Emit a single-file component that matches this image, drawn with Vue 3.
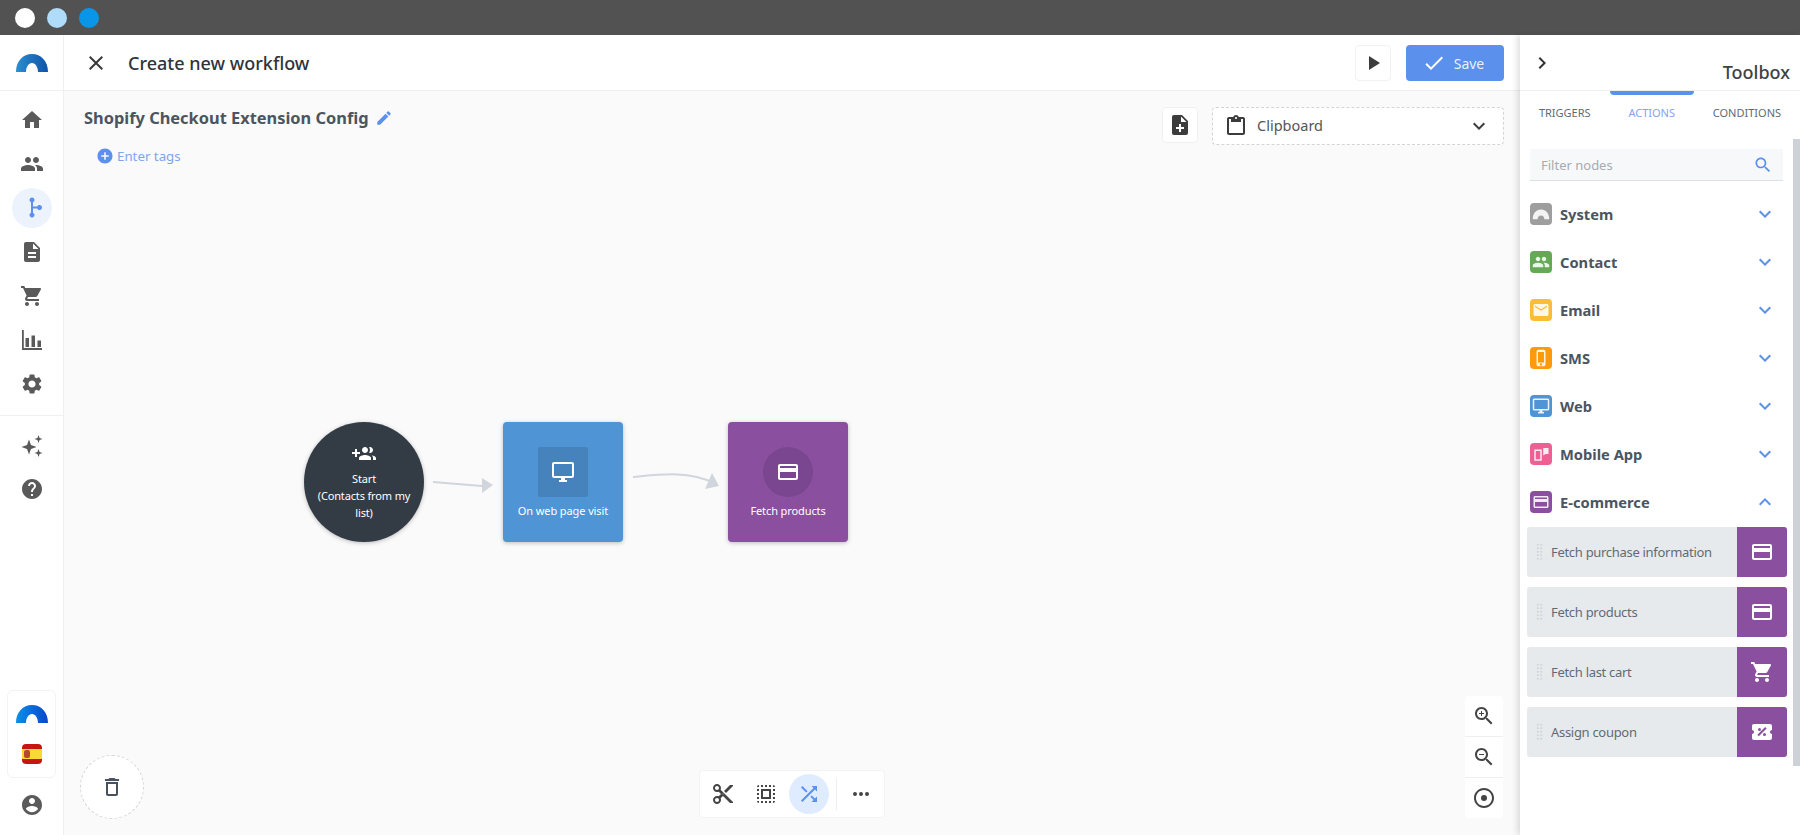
<script setup>
const icons = {
  home: 'M10 20v-6h4v6h5v-8h3L12 3 2 12h3v8z',
  people: 'M16 11c1.66 0 2.99-1.34 2.99-3S17.66 5 16 5c-1.66 0-3 1.34-3 3s1.34 3 3 3zm-8 0c1.66 0 2.99-1.34 2.99-3S9.66 5 8 5C6.34 5 5 6.34 5 8s1.34 3 3 3zm0 2c-2.33 0-7 1.17-7 3.5V19h14v-2.5c0-2.33-4.67-3.5-7-3.5zm8 0c-.29 0-.62.02-.97.05 1.16.84 1.97 1.97 1.97 3.45V19h6v-2.5c0-2.33-4.67-3.5-7-3.5z',
  flow: 'M12 1.500a2.500 2.500 0 0 1 1 4.800v4.200h4.200a2.500 2.500 0 1 1 0 2H13v4.200a2.500 2.500 0 1 1-2 0V6.300a2.500 2.500 0 0 1 1-4.800z',
  doc: 'M14 2H6c-1.1 0-1.99.9-1.99 2L4 20c0 1.1.89 2 1.99 2H18c1.1 0 2-.9 2-2V8l-6-6zm2 16H8v-2h8v2zm0-4H8v-2h8v2zm-3-5V3.5L18.5 9H13z',
  cart: 'M7 18c-1.1 0-1.99.9-1.99 2S5.9 22 7 22s2-.9 2-2-.9-2-2-2zM1 2v2h2l3.6 7.59-1.35 2.45c-.16.28-.25.61-.25.96 0 1.1.9 2 2 2h12v-2H7.42c-.14 0-.25-.11-.25-.25l.03-.12.9-1.63h7.45c.75 0 1.41-.41 1.75-1.03l3.58-6.49c.08-.14.12-.31.12-.48 0-.55-.45-1-1-1H5.21l-.94-2H1zm16 16c-1.1 0-1.99.9-1.99 2s.89 2 1.99 2 2-.9 2-2-.9-2-2-2z',
  chart: 'M2 2h1.800v18H22v2H2zM5.500 10h3.500v9H5.500zM11.500 7.500H15V19h-3.500zM17.500 12.500H21V19h-3.500z',
  gear: 'M19.14 12.94c.04-.3.06-.61.06-.94 0-.32-.02-.64-.07-.94l2.03-1.58c.18-.14.23-.41.12-.61l-1.92-3.32c-.12-.22-.37-.29-.59-.22l-2.39.96c-.5-.38-1.03-.7-1.62-.94l-.36-2.54c-.04-.24-.24-.41-.48-.41h-3.84c-.24 0-.43.17-.47.41l-.36 2.54c-.59.24-1.13.57-1.62.94l-2.39-.96c-.22-.08-.47 0-.59.22L2.74 8.87c-.12.21-.08.47.12.61l2.03 1.58c-.05.3-.09.63-.09.94s.02.64.07.94l-2.03 1.58c-.18.14-.23.41-.12.61l1.92 3.32c.12.22.37.29.59.22l2.39-.96c.5.38 1.03.7 1.62.94l.36 2.54c.05.24.24.41.48.41h3.84c.24 0 .44-.17.47-.41l.36-2.54c.59-.24 1.13-.56 1.62-.94l2.39.96c.22.08.47 0 .59-.22l1.92-3.32c.12-.22.07-.47-.12-.61l-2.01-1.58zM12 15.6c-1.98 0-3.6-1.62-3.6-3.6s1.62-3.6 3.6-3.6 3.6 1.62 3.6 3.6-1.62 3.6-3.6 3.6z',
  sparkle: 'M9 5.500l2 5.500 5.500 2-5.500 2-2 5.500-2-5.500-5.500-2 5.500-2zM18.500 1l1.100 2.900 2.900 1.100-2.900 1.100-1.100 2.900-1.100-2.900L14.500 5l2.900-1.100zM18.500 15l1.100 2.900 2.900 1.100-2.900 1.100-1.100 2.900-1.100-2.900-2.900-1.100 2.900-1.100z',
  help: 'M12 2C6.48 2 2 6.48 2 12s4.48 10 10 10 10-4.48 10-10S17.52 2 12 2zm1 17h-2v-2h2v2zm2.07-7.75l-.9.92C13.45 12.9 13 13.5 13 15h-2v-.5c0-1.1.45-2.1 1.17-2.83l1.24-1.26c.37-.36.59-.86.59-1.41 0-1.1-.9-2-2-2s-2 .9-2 2H8c0-2.21 1.79-4 4-4s4 1.790 4 4c0 .88-.36 1.68-.93 2.25z',
  account: 'M12 2C6.48 2 2 6.48 2 12s4.48 10 10 10 10-4.48 10-10S17.52 2 12 2zm0 3c1.66 0 3 1.34 3 3s-1.34 3-3 3-3-1.34-3-3 1.34-3 3-3zm0 14.2c-2.5 0-4.71-1.28-6-3.22.03-1.99 4-3.08 6-3.08 1.99 0 5.97 1.09 6 3.08-1.29 1.94-3.5 3.22-6 3.22z',
  close: 'M19 6.41L17.59 5 12 10.59 6.41 5 5 6.41 10.59 12 5 17.59 6.41 19 12 13.41 17.59 19 19 17.59 13.41 12z',
  play: 'M8 5v14l11-7z',
  check: 'M9 16.17L4.83 12l-1.42 1.41L9 19 21 7l-1.41-1.41z',
  noteAdd: 'M14 2H6c-1.1 0-2 .9-2 2v16c0 1.1.9 2 2 2h12c1.1 0 2-.9 2-2V8l-6-6zm2 14h-3v3h-2v-3H8v-2h3v-3h2v3h3v2zm-3-7V3.5L18.5 9H13z',
  clipboard: 'M19 3h-4.18C14.4 1.84 13.3 1 12 1c-1.3 0-2.4.84-2.82 2H5c-1.1 0-2 .9-2 2v14c0 1.1.9 2 2 2h14c1.1 0 2-.9 2-2V5c0-1.1-.9-2-2-2zm-7 0c.55 0 1 .45 1 1s-.45 1-1 1-1-.45-1-1 .45-1 1-1zm7 16H5V5h2v3h10V5h2v14z',
  down: 'M16.59 8.59L12 13.17 7.41 8.59 6 10l6 6 6-6z',
  up: 'M12 8l-6 6 1.41 1.41L12 10.83l4.59 4.58L18 14z',
  right: 'M10 6L8.59 7.41 13.17 12l-4.58 4.59L10 18l6-6z',
  search: 'M15.5 14h-.79l-.28-.27C15.41 12.59 16 11.11 16 9.5 16 5.91 13.09 3 9.5 3S3 5.91 3 9.5 5.91 16 9.5 16c1.61 0 3.09-.59 4.23-1.57l.27.28v.79l5 4.99L20.49 19l-4.99-5zm-6 0C7.01 14 5 11.99 5 9.5S7.01 5 9.5 5 14 7.01 14 9.5 11.99 14 9.5 14z',
  card: 'M20 4H4c-1.11 0-1.99.89-1.99 2L2 18c0 1.11.89 2 2 2h16c1.11 0 2-.89 2-2V6c0-1.11-.89-2-2-2zm0 14H4v-6h16v6zm0-10H4V6h16v2z',
  email: 'M20 4H4c-1.1 0-1.99.9-1.99 2L2 18c0 1.1.9 2 2 2h16c1.1 0 2-.9 2-2V6c0-1.1-.9-2-2-2zm0 4l-8 5-8-5V6l8 5 8-5v2z',
  phone: 'M15.5 1h-7C7.12 1 6 2.12 6 3.500v17C6 21.880 7.120 23 8.500 23h7c1.380 0 2.500-1.120 2.500-2.500v-17C18 2.120 16.880 1 15.500 1zm-3.500 21c-.83 0-1.500-.67-1.500-1.500S11.170 19 12 19s1.500.67 1.500 1.500S12.830 22 12 22zm4-4H8V4h8v14z',
  desktop: 'M21 2H3c-1.1 0-2 .9-2 2v12c0 1.1.9 2 2 2h7v2H8v2h8v-2h-2v-2h7c1.1 0 2-.9 2-2V4c0-1.1-.9-2-2-2zm0 14H3V4h18v12z',
  app: 'M3 6h10v15H3zm2 2v11h6V8zM15 4h7v8h-4l-3 2z',
  groupAdd: 'M8 10H5V7H3v3H0v2h3v3h2v-3h3v-2zm10 1c1.66 0 2.99-1.34 2.99-3S19.66 5 18 5c-.32 0-.63.05-.91.14.57.81.9 1.79.9 2.86s-.34 2.04-.9 2.86c.28.09.59.14.91.14zm-5 0c1.66 0 2.99-1.34 2.99-3S14.66 5 13 5s-3 1.34-3 3 1.34 3 3 3zm6.62 2.16c.83.73 1.38 1.66 1.38 2.84v2h3v-2c0-1.54-2.37-2.49-4.38-2.84zM13 13c-2 0-6 1-6 3v2h12v-2c0-2-4-3-6-3z',
  coupon: 'M22 10V6c0-1.1-.9-2-2-2H4c-1.1 0-1.99.9-1.99 2v4c1.1 0 1.990.9 1.990 2s-.89 2-2 2v4c0 1.100.9 2 2 2h16c1.100 0 2-.9 2-2v-4c-1.100 0-2-.9-2-2s.9-2 2-2zM9.500 8a1.500 1.500 0 1 1 0 3 1.500 1.500 0 0 1 0-3zm5 8a1.500 1.500 0 1 1 0-3 1.500 1.500 0 0 1 0 3zm-5.700.2l-1.400-1.400 7.800-7.800 1.400 1.400z',
  zoomIn: 'M15.5 14h-.79l-.28-.27C15.41 12.59 16 11.11 16 9.5 16 5.91 13.09 3 9.5 3S3 5.91 3 9.5 5.91 16 9.5 16c1.61 0 3.09-.59 4.23-1.57l.27.28v.79l5 4.99L20.49 19l-4.99-5zm-6 0C7.01 14 5 11.99 5 9.5S7.01 5 9.5 5 14 7.01 14 9.5 11.99 14 9.5 14zm2.500-4h-2v2H9v-2H7V9h2V7h1v2h2v1z',
  zoomOut: 'M15.5 14h-.79l-.28-.27C15.41 12.59 16 11.11 16 9.5 16 5.91 13.09 3 9.5 3S3 5.91 3 9.5 5.91 16 9.5 16c1.61 0 3.09-.59 4.23-1.57l.27.28v.79l5 4.99L20.49 19l-4.99-5zm-6 0C7.01 14 5 11.99 5 9.5S7.01 5 9.5 5 14 7.01 14 9.5 11.99 14 9.5 14zM7 9h5v1H7z',
  target: 'M12 9a3 3 0 1 0 0 6 3 3 0 0 0 0-6zm0-7C6.48 2 2 6.48 2 12s4.48 10 10 10 10-4.48 10-10S17.52 2 12 2zm0 18c-4.42 0-8-3.58-8-8s3.58-8 8-8 8 3.58 8 8-3.58 8-8 8z',
  shuffle: 'M10.59 9.17L5.41 4 4 5.41l5.17 5.17 1.42-1.41zM14.5 4l2.04 2.04L4 18.59 5.41 20 17.96 7.46 20 9.5V4h-5.5zm.33 9.41l-1.41 1.41 3.13 3.13L14.5 20H20v-5.5l-2.04 2.04-3.13-3.13z',
  cut: 'M9.64 7.64c.23-.5.36-1.05.36-1.64 0-2.21-1.79-4-4-4S2 3.79 2 6s1.79 4 4 4c.59 0 1.14-.13 1.64-.36L10 12l-2.36 2.36C7.14 14.13 6.59 14 6 14c-2.21 0-4 1.79-4 4s1.79 4 4 4 4-1.79 4-4c0-.59-.13-1.14-.36-1.64L12 14l7 7h3v-1L9.64 7.64zM6 8c-1.1 0-2-.89-2-2s.9-2 2-2 2 .89 2 2-.9 2-2 2zm0 12c-1.1 0-2-.89-2-2s.9-2 2-2 2 .89 2 2-.9 2-2 2zm6-7.500c-.28 0-.5-.22-.5-.5s.22-.5.5-.5.5.22.5.5-.22.5-.5.5zM19 3l-6 6 2 2 7-7V3z',
  selectAll: 'M3 5h2V3c-1.1 0-2 .9-2 2zm0 8h2v-2H3v2zm4 8h2v-2H7v2zM3 9h2V7H3v2zm10-6h-2v2h2V3zm6 0v2h2c0-1.1-.9-2-2-2zM5 21v-2H3c0 1.1.9 2 2 2zm-2-4h2v-2H3v2zM9 3H7v2h2V3zm2 18h2v-2h-2v2zm8-8h2v-2h-2v2zm0 8c1.1 0 2-.9 2-2h-2v2zm0-12h2V7h-2v2zm0 8h2v-2h-2v2zm-4 4h2v-2h-2v2zm0-16h2V3h-2v2zM7 17h10V7H7v10zm2-8h6v6H9V9z',
  more: 'M6 10a2 2 0 1 0 0 4 2 2 0 0 0 0-4zm12 0a2 2 0 1 0 0 4 2 2 0 0 0 0-4zm-6 0a2 2 0 1 0 0 4 2 2 0 0 0 0-4z',
  trash: 'M6 19c0 1.1.9 2 2 2h8c1.1 0 2-.9 2-2V7H6v12zM8 9h8v10H8V9zm7.5-5l-1-1h-5l-1 1H5v2h14V4z',
  edit: 'M3 17.25V21h3.75L17.81 9.94l-3.75-3.75L3 17.25zM20.71 7.04c.39-.39.39-1.02 0-1.41l-2.34-2.34c-.39-.39-1.02-.39-1.41 0l-1.83 1.83 3.75 3.75 1.83-1.83z',
  addCircle: 'M12 2C6.48 2 2 6.48 2 12s4.48 10 10 10 10-4.48 10-10S17.52 2 12 2zm5 11h-4v4h-2v-4H7v-2h4V7h2v4h4v2z',
  arch: 'M1 19C1 11 5.500 6 12 6s11 5 11 13h-6.500c0-3-1.800-5-4.500-5s-4.500 2-4.500 5z'
}

const navTop = [
  { icon: 'home' },
  { icon: 'people' },
  { icon: 'flow', active: true },
  { icon: 'doc' },
  { icon: 'cart' },
  { icon: 'chart' },
  { icon: 'gear' }
]
const navBottom = ['sparkle', 'help']

const tabs = [
  { label: 'Triggers' },
  { label: 'Actions', active: true },
  { label: 'Conditions' }
]

const groups = [
  { label: 'System', icon: 'arch', color: '#9e9e9e' },
  { label: 'Contact', icon: 'people', color: '#64a955' },
  { label: 'Email', icon: 'email', color: '#fbbd35' },
  { label: 'SMS', icon: 'phone', color: '#fd9a0b' },
  { label: 'Web', icon: 'desktop', color: '#4f94d4' },
  { label: 'Mobile App', icon: 'app', color: '#ee5f94' },
  { label: 'E-commerce', icon: 'card', color: '#8a4f9e', open: true }
]

const items = [
  { label: 'Fetch purchase information', icon: 'card' },
  { label: 'Fetch products', icon: 'card' },
  { label: 'Fetch last cart', icon: 'cart' },
  { label: 'Assign coupon', icon: 'coupon' }
]

const tools = [
  { icon: 'cut' },
  { icon: 'selectAll' },
  { icon: 'shuffle', active: true }
]
const zooms = ['zoomIn', 'zoomOut', 'target']
</script>

<template>
  <div class="app">
    <div class="titlebar">
      <span class="dot dot-white"></span>
      <span class="dot dot-light"></span>
      <span class="dot dot-blue"></span>
    </div>

    <div class="body">
      <aside class="sidebar">
        <div class="side-logo">
          <svg width="32" height="18" viewBox="0 0 32 18">
            <defs>
              <linearGradient id="logoA" x1="0" x2="1" y1="0" y2="0">
                <stop offset="0" stop-color="#2a8fcf" />
                <stop offset="1" stop-color="#0f53a8" />
              </linearGradient>
            </defs>
            <path d="M0 18C0 7 7 0 16 0s16 7 16 18H22c0-5-2.500-9-6-9s-6 4-6 9z" fill="url(#logoA)" />
          </svg>
        </div>
        <nav class="nav">
          <div v-for="n in navTop" :key="n.icon" class="nav-item" :class="{ active: n.active }">
            <svg width="24" height="24" viewBox="0 0 24 24"><path :d="icons[n.icon]" /></svg>
          </div>
        </nav>
        <nav class="nav nav-second">
          <div v-for="n in navBottom" :key="n" class="nav-item">
            <svg width="24" height="24" viewBox="0 0 24 24"><path :d="icons[n]" /></svg>
          </div>
        </nav>
        <div class="side-bottom">
          <div class="brand-card">
            <svg width="32" height="18" viewBox="0 0 32 18">
              <defs>
                <linearGradient id="logoB" x1="0" x2="1" y1="0" y2="0">
                  <stop offset="0" stop-color="#0a90ea" />
                  <stop offset="1" stop-color="#0a45cc" />
                </linearGradient>
              </defs>
              <path d="M0 18C0 7 7 0 16 0s16 7 16 18H22c0-5-2.500-9-6-9s-6 4-6 9z" fill="url(#logoB)" />
            </svg>
            <div class="flag">
              <span class="flag-emblem"></span>
            </div>
          </div>
          <div class="nav-item account">
            <svg width="24" height="24" viewBox="0 0 24 24"><path :d="icons.account" /></svg>
          </div>
        </div>
      </aside>

      <main class="main">
        <header class="topbar">
          <svg class="close" width="24" height="24" viewBox="0 0 24 24"><path :d="icons.close" /></svg>
          <h1 class="page-title">Create new workflow</h1>
          <div class="top-actions">
            <button class="icon-btn play">
              <svg width="24" height="24" viewBox="0 0 24 24"><path :d="icons.play" /></svg>
            </button>
            <button class="save">
              <svg width="24" height="24" viewBox="0 0 24 24"><path :d="icons.check" /></svg>
              <span>Save</span>
            </button>
          </div>
        </header>

        <section class="canvas">
          <div class="canvas-head">
            <div class="head-left">
              <div class="flow-name">
                <span>Shopify Checkout Extension Config</span>
                <svg width="18" height="18" viewBox="0 0 24 24"><path :d="icons.edit" /></svg>
              </div>
              <div class="tags">
                <svg width="18" height="18" viewBox="0 0 24 24"><path :d="icons.addCircle" /></svg>
                <span>Enter tags</span>
              </div>
            </div>
            <div class="head-right">
              <button class="icon-btn note">
                <svg width="24" height="24" viewBox="0 0 24 24"><path :d="icons.noteAdd" /></svg>
              </button>
              <div class="clipboard">
                <svg width="24" height="24" viewBox="0 0 24 24"><path :d="icons.clipboard" /></svg>
                <span class="clip-text">Clipboard</span>
                <svg class="clip-arrow" width="24" height="24" viewBox="0 0 24 24"><path :d="icons.down" /></svg>
              </div>
            </div>
          </div>

          <svg class="edges" width="1456" height="744">
            <path d="M369 391L418 395" />
            <polygon points="418,387 429,394 418,402" />
            <path d="M569 386C600 383 625 380 650 392" />
            <polygon points="641,398 655,395 648,382" />
          </svg>

          <div class="node node-start">
            <svg width="24" height="24" viewBox="0 0 24 24"><path :d="icons.groupAdd" /></svg>
            <div class="start-text">Start<br />(Contacts from my list)</div>
          </div>
          <div class="node node-box node-web">
            <span class="node-icon square">
              <svg width="24" height="24" viewBox="0 0 24 24"><path :d="icons.desktop" /></svg>
            </span>
            <span class="node-label">On web page visit</span>
          </div>
          <div class="node node-box node-fetch">
            <span class="node-icon round">
              <svg width="24" height="24" viewBox="0 0 24 24"><path :d="icons.card" /></svg>
            </span>
            <span class="node-label">Fetch products</span>
          </div>

          <div class="trash">
            <svg width="24" height="24" viewBox="0 0 24 24"><path :d="icons.trash" /></svg>
          </div>

          <div class="toolbar">
            <span v-for="t in tools" :key="t.icon" class="tool" :class="{ active: t.active }">
              <svg width="24" height="24" viewBox="0 0 24 24"><path :d="icons[t.icon]" /></svg>
            </span>
            <span class="tool-sep"></span>
            <span class="tool">
              <svg width="24" height="24" viewBox="0 0 24 24"><path :d="icons.more" /></svg>
            </span>
          </div>

          <div class="zoombar">
            <span v-for="z in zooms" :key="z" class="zoom-cell">
              <svg width="24" height="24" viewBox="0 0 24 24"><path :d="icons[z]" /></svg>
            </span>
          </div>
        </section>
      </main>

      <aside class="panel">
        <div class="panel-head">
          <svg width="24" height="24" viewBox="0 0 24 24"><path :d="icons.right" /></svg>
          <span class="panel-title">Toolbox</span>
        </div>
        <div class="tabs">
          <div v-for="t in tabs" :key="t.label" class="tab" :class="{ active: t.active }">{{ t.label }}</div>
        </div>
        <div class="panel-body">
          <div class="panel-scroll">
            <div class="filter">
              <span>Filter nodes</span>
              <svg width="20" height="20" viewBox="0 0 24 24"><path :d="icons.search" /></svg>
            </div>
            <div v-for="g in groups" :key="g.label" class="group">
              <span class="group-icon" :style="{ background: g.color }">
                <svg width="18" height="18" viewBox="0 0 24 24"><path :d="icons[g.icon]" /></svg>
              </span>
              <span class="group-label">{{ g.label }}</span>
              <svg class="group-arrow" width="24" height="24" viewBox="0 0 24 24"><path :d="g.open ? icons.up : icons.down" /></svg>
            </div>
            <div class="items">
              <div v-for="i in items" :key="i.label" class="item">
                <span class="grip"></span>
                <span class="item-label">{{ i.label }}</span>
                <span class="item-icon">
                  <svg width="24" height="24" viewBox="0 0 24 24"><path :d="icons[i.icon]" /></svg>
                </span>
              </div>
            </div>
          </div>
          <div class="scrollbar"></div>
        </div>
      </aside>
    </div>
  </div>
</template>

<style>
html, body {
  margin: 0;
  height: 100%;
  overflow: hidden;
}
</style>

<style scoped>
.app {
  width: 1800px;
  height: 835px;
  display: flex;
  flex-direction: column;
  font-family: "Noto Sans", "Open Sans", sans-serif;
  color: #3f4953;
  overflow: hidden;
}

.titlebar {
  height: 35px;
  flex: none;
  background: #525252;
  display: flex;
  align-items: center;
  gap: 12px;
  padding-left: 15px;
}
.dot {
  width: 20px;
  height: 20px;
  border-radius: 50%;
}
.dot-white { background: #fff; }
.dot-light { background: #aedcf9; }
.dot-blue { background: #0a96e8; }

.body {
  flex: 1;
  display: flex;
  min-height: 0;
}

/* sidebar */
.sidebar {
  width: 63px;
  flex: none;
  background: #fff;
  border-right: 1px solid #f0f0f0;
  display: flex;
  flex-direction: column;
}
.side-logo {
  height: 56px;
  flex: none;
  border-bottom: 1px solid #f0f0f0;
  display: flex;
  align-items: center;
  justify-content: center;
  box-sizing: border-box;
}
.nav {
  display: flex;
  flex-direction: column;
  align-items: center;
  gap: 4px;
  padding-top: 9px;
}
.nav-second {
  border-top: 1px solid #f0f0f0;
  margin-top: 11px;
  padding-top: 10px;
  gap: 3px;
}
.nav-item {
  width: 40px;
  height: 40px;
  display: flex;
  align-items: center;
  justify-content: center;
  border-radius: 50%;
}
.nav-item svg { fill: #5a5a5a; }
.nav-item.active { background: #edf3fd; }
.nav-item.active svg { fill: #5b90ec; }
.side-bottom {
  margin-top: auto;
  display: flex;
  flex-direction: column;
  align-items: center;
  padding-bottom: 10px;
}
.brand-card {
  width: 49px;
  height: 88px;
  box-sizing: border-box;
  border: 1px solid #f3f3f3;
  border-radius: 6px;
  display: flex;
  flex-direction: column;
  align-items: center;
  gap: 21px;
  padding-top: 14px;
  margin-bottom: 7px;
}
.flag {
  width: 20px;
  height: 20px;
  border-radius: 4px;
  background: linear-gradient(#c8150f 0 25%, #fbd935 25% 75%, #c8150f 75%);
  position: relative;
}
.flag-emblem {
  position: absolute;
  left: 2px;
  top: 6px;
  width: 6px;
  height: 8px;
  border-radius: 2px;
  background: #b5482f;
}
.account { height: 40px; }

/* main */
.main {
  flex: 1;
  min-width: 0;
  display: flex;
  flex-direction: column;
}
.topbar {
  height: 56px;
  flex: none;
  box-sizing: border-box;
  background: #fff;
  border-bottom: 1px solid #eeeeee;
  display: flex;
  align-items: center;
  padding: 1px 16px 0 20px;
}
.close { fill: #3a3a3a; flex: none; }
.page-title {
  margin: 0 0 0 20px;
  font-size: 18px;
  line-height: 24px;
  font-weight: 500;
  color: #2f343a;
}
.top-actions {
  margin-left: auto;
  display: flex;
  gap: 15px;
}
.icon-btn {
  background: #fff;
  border: 1px solid #f1f1f1;
  border-radius: 4px;
  padding: 0;
  display: flex;
  align-items: center;
  justify-content: center;
}
.icon-btn svg { fill: #3c3c3c; }
.play { width: 36px; height: 36px; }
.save {
  width: 98px;
  height: 36px;
  border: none;
  border-radius: 4px;
  background: #5b90ec;
  color: #e8f0fd;
  font: 400 14px "Noto Sans", sans-serif;
  display: flex;
  align-items: center;
  justify-content: center;
  gap: 8px;
  padding: 0 4px 0 0;
}
.save svg { fill: #fff; }

/* canvas */
.canvas {
  flex: 1;
  position: relative;
  background: #fafafa;
  min-height: 0;
}
.canvas-head {
  display: flex;
  justify-content: space-between;
  padding: 16px 16px 0 20px;
}
.head-left { margin-top: -1px; }
.flow-name {
  display: flex;
  align-items: center;
  gap: 6px;
  font-size: 16.4px;
  line-height: 24px;
  font-weight: 700;
  color: #4a5561;
}
.flow-name svg { fill: #5b90ec; }
.tags {
  display: flex;
  align-items: center;
  gap: 3px;
  margin: 16px 0 0 12px;
  font-size: 13.300px;
  line-height: 20px;
  color: #7fa4ef;
}
.tags svg { fill: #5b90ec; }
.head-right {
  display: flex;
  align-items: flex-start;
  gap: 15px;
}
.note { width: 36px; height: 36px; margin-right: -1px; }
.clipboard {
  width: 292px;
  height: 38px;
  box-sizing: border-box;
  background: #fff;
  border: 1px dashed #d4d4d4;
  border-radius: 4px;
  display: flex;
  align-items: center;
  gap: 9px;
  padding: 0 12px 0 11px;
  font-size: 14.500px;
  color: #555;
}
.clip-text { padding-bottom: 3px; }
.clipboard svg { fill: #3c3c3c; }
.clip-arrow { margin-left: auto; }

.edges {
  position: absolute;
  left: 0;
  top: 0;
  pointer-events: none;
}
.edges path {
  fill: none;
  stroke: #d0d6dc;
  stroke-width: 2;
}
.edges polygon { fill: #d0d6dc; }

.node {
  position: absolute;
  top: 331px;
  width: 120px;
  height: 120px;
  color: #fff;
  box-shadow: 0 1px 4px rgba(0, 0, 0, 0.25);
}
.node-start {
  left: 240px;
  border-radius: 50%;
  background: #333c45;
  display: flex;
  flex-direction: column;
  align-items: center;
  padding-top: 20px;
  box-sizing: border-box;
}
.start-text {
  width: 100px;
  margin-top: 4px;
  text-align: center;
  font-size: 11px;
  letter-spacing: -0.15px;
  line-height: 17px;
}
.node-start svg { fill: #fff; }
.node-box {
  border-radius: 4px;
  display: flex;
  flex-direction: column;
  align-items: center;
  padding-top: 25px;
  box-sizing: border-box;
}
.node-web { left: 439px; background: #4f94d4; }
.node-fetch { left: 664px; background: #8a4f9e; }
.node-icon {
  width: 50px;
  height: 50px;
  display: flex;
  align-items: center;
  justify-content: center;
}
.node-icon svg { fill: #fff; }
.node-icon.square { background: #4682bb; border-radius: 2px; }
.node-icon.round { background: #7a4690; border-radius: 50%; }
.node-label {
  margin-top: 5px;
  font-size: 11px;
  letter-spacing: -0.1px;
  line-height: 18px;
  white-space: nowrap;
}

.trash {
  position: absolute;
  left: 16px;
  bottom: 16px;
  width: 64px;
  height: 64px;
  box-sizing: border-box;
  border: 1px dashed #d6d6d6;
  border-radius: 50%;
  background: #fff;
  display: flex;
  align-items: center;
  justify-content: center;
}
.trash svg { fill: #47525e; }

.toolbar {
  position: absolute;
  left: 635px;
  bottom: 17px;
  height: 48px;
  box-sizing: border-box;
  width: 186px;
  background: #fff;
  border: 1px solid #f3f3f3;
  border-radius: 4px;
  display: flex;
  align-items: center;
  padding-left: 3px;
  gap: 3px;
}
.tool {
  width: 40px;
  height: 40px;
  border-radius: 50%;
  display: flex;
  align-items: center;
  justify-content: center;
}
.tool svg { fill: #444; }
.tool.active { background: #dfecff; }
.tool.active svg { fill: #5b90ec; }
.tool-sep {
  width: 1px;
  height: 32px;
  background: #eeeeee;
  margin: 0 1px 0 4px;
}

.zoombar {
  position: absolute;
  right: 17px;
  bottom: 17px;
  width: 38px;
  border-radius: 4px;
  background: #fff;
  display: flex;
  flex-direction: column;
}
.zoom-cell {
  height: 40px;
  display: flex;
  align-items: center;
  justify-content: center;
  border-bottom: 1px solid #eeeeee;
}
.zoom-cell:last-child { border-bottom: none; }
.zoom-cell svg { fill: #444; }

/* toolbox */
.panel {
  width: 280px;
  flex: none;
  background: #fff;
  box-shadow: -3px 0 6px rgba(0, 0, 0, 0.12);
  display: flex;
  flex-direction: column;
  z-index: 1;
}
.panel-head {
  height: 56px;
  flex: none;
  box-sizing: border-box;
  border-bottom: 1px solid #eeeeee;
  padding: 16px 0 0 10px;
  display: flex;
  justify-content: space-between;
  align-items: flex-start;
}
.panel-head svg { fill: #333; }
.panel-title {
  align-self: flex-end;
  margin: 0 10px 6px 0;
  font-size: 18px;
  line-height: 24px;
  font-weight: 500;
  color: #3d4248;
}
.tabs {
  display: flex;
  flex: none;
  height: 47px;
  box-sizing: border-box;
  padding-top: 10px;
}
.tab {
  flex: 1 1 auto;
  text-align: center;
  font-size: 11px;
  line-height: 24px;
  text-transform: uppercase;
  color: #606a74;
  position: relative;
}
.tab.active { color: #7fa4ef; }
.tab.active::before {
  content: "";
  position: absolute;
  left: 0;
  right: 0;
  top: -10px;
  height: 4px;
  background: #5b90ec;
  border-radius: 0 0 6px 6px;
}
.panel-body {
  flex: 1;
  display: flex;
  min-height: 0;
}
.panel-scroll {
  width: 273px;
  box-sizing: border-box;
  padding: 11px 10px 0;
}
.scrollbar {
  width: 7px;
  height: 627px;
  margin-top: 1px;
  background: #ccd2d8;
}
.filter {
  height: 32px;
  box-sizing: border-box;
  background: #f7f8fa;
  border-bottom: 1px solid #dde1e6;
  display: flex;
  align-items: center;
  justify-content: space-between;
  padding: 0 10px 0 11px;
  font-size: 13px;
  color: #a6abb1;
  margin-bottom: 9px;
}
.filter svg { fill: #5b90ec; }
.group {
  height: 48px;
  display: flex;
  align-items: center;
}
.group-icon {
  width: 22px;
  height: 22px;
  border-radius: 4px;
  display: flex;
  align-items: center;
  justify-content: center;
  margin-right: 8px;
}
.group-icon svg { fill: rgba(255, 255, 255, 0.88); }
.group-label {
  font-size: 14.700px;
  font-weight: 700;
  color: #4a5561;
}
.group-arrow {
  margin-left: auto;
  margin-right: 6px;
  fill: #5b90ec;
}
.items {
  display: flex;
  flex-direction: column;
  gap: 10px;
  margin: 1px -4px 0 -3px;
}
.item {
  height: 50px;
  background: #e7eaed;
  border-radius: 3px;
  display: flex;
  align-items: center;
  overflow: hidden;
}
.grip {
  width: 7px;
  height: 18px;
  margin: 0 8px 0 9px;
  background-image: radial-gradient(circle, #cdd2d6 1px, transparent 1.1px);
  background-size: 3.500px 3.500px;
}
.item-label {
  font-size: 13px;
  letter-spacing: -0.3px;
  color: #5f6b76;
  white-space: nowrap;
}
.item-icon {
  margin-left: auto;
  width: 50px;
  height: 50px;
  background: #8a4f9e;
  display: flex;
  align-items: center;
  justify-content: center;
}
.item-icon svg { fill: #fff; }
</style>
